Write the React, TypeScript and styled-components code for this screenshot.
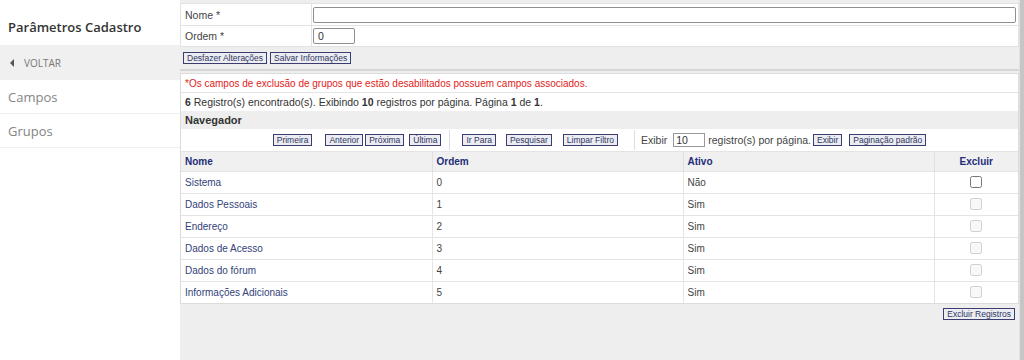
import React from 'react';
import styled, {createGlobalStyle} from 'styled-components';

type Grupo = {
    nome: string;
    ordem: number;
    ativo: boolean;
};

const grupos: Grupo[] = [
    {nome: 'Sistema', ordem: 0, ativo: false},
    {nome: 'Dados Pessoais', ordem: 1, ativo: true},
    {nome: 'Endereço', ordem: 2, ativo: true},
    {nome: 'Dados de Acesso', ordem: 3, ativo: true},
    {nome: 'Dados do fórum', ordem: 4, ativo: true},
    {nome: 'Informações Adicionais', ordem: 5, ativo: true},
];

const GlobalStyle = createGlobalStyle`
    html, body {
        margin: 0;
        padding: 0;
        background: #eeeeee;
    }
    * {
        box-sizing: border-box;
    }
`;

const Sidebar = () => (
    <Side>
        <SideTitle>{'Parâmetros Cadastro'}</SideTitle>
        <BackRow>
            <BackArrow/>
            {'VOLTAR'}
        </BackRow>
        <SideItem>{'Campos'}</SideItem>
        <SideItem>{'Grupos'}</SideItem>
    </Side>
);

const NavBar = () => (
    <NavRow>
        <Btn>{'Primeira'}</Btn>
        <Btn $ml={11}>{'Anterior'}</Btn>
        <Btn>{'Próxima'}</Btn>
        <Btn $ml={3}>{'Última'}</Btn>
        <NavSep/>
        <Btn>{'Ir Para'}</Btn>
        <Btn $ml={8}>{'Pesquisar'}</Btn>
        <Btn $ml={9}>{'Limpar Filtro'}</Btn>
        <NavSep $wide={true}/>
        <NavText>{'Exibir'}</NavText>
        <PerPage defaultValue='10'/>
        <NavText>{'registro(s) por página.'}</NavText>
        <Btn>{'Exibir'}</Btn>
        <Btn $ml={5}>{'Paginação padrão'}</Btn>
    </NavRow>
);

const App = () => {
    return (
        <>
            <GlobalStyle/>
            <Page>
                <Sidebar/>
                <Main>
                    <Content>
                        <FormTable>
                            <tbody>
                                <FormRow>
                                    <Label>{'Nome *'}</Label>
                                    <Field><TextInput $width={703}/></Field>
                                </FormRow>
                                <FormRow $h={21}>
                                    <Label>{'Ordem *'}</Label>
                                    <Field><TextInput $width={42} defaultValue='0'/></Field>
                                </FormRow>
                            </tbody>
                        </FormTable>
                        <FormActions>
                            <Btn>{'Desfazer Alterações'}</Btn>
                            <Btn>{'Salvar Informações'}</Btn>
                        </FormActions>
                        <Rule/>
                        <ListPanel>
                            <Warning>{'*Os campos de exclusão de grupos que estão desabilitados possuem campos associados.'}</Warning>
                            <Info>
                                <b>{'6'}</b>{' Registro(s) encontrado(s). Exibindo '}<b>{'10'}</b>{' registros por página. Página '}<b>{'1'}</b>{' de '}<b>{'1'}</b>{'.'}
                            </Info>
                            <NavTitle>{'Navegador'}</NavTitle>
                            <NavBar/>
                            <Grid>
                                <thead>
                                    <tr>
                                        <Th>{'Nome'}</Th>
                                        <Th>{'Ordem'}</Th>
                                        <Th>{'Ativo'}</Th>
                                        <Th $center={true}>{'Excluir'}</Th>
                                    </tr>
                                </thead>
                                <tbody>
                                    {grupos.map((g) => (
                                        <tr key={g.nome}>
                                            <Td $link={true}>{g.nome}</Td>
                                            <Td>{g.ordem}</Td>
                                            <Td>{g.ativo ? 'Sim' : 'Não'}</Td>
                                            <Td $center={true}>
                                                <Check
                                                    type='checkbox'
                                                    disabled={g.ativo}
                                                />
                                            </Td>
                                        </tr>
                                    ))}
                                </tbody>
                            </Grid>
                        </ListPanel>
                        <Footer>
                            <Btn>{'Excluir Registros'}</Btn>
                        </Footer>
                    </Content>
                    <Scroll/>
                </Main>
            </Page>
        </>
    );
};

const Page = styled.div`
    display: flex;
    height: 360px;
    width: 1024px;
    overflow: hidden;
`;

const Side = styled.div`
    width: 180px;
    flex-shrink: 0;
    background: #ffffff;
    padding-top: 3px;
    font-family: 'Open Sans', sans-serif;
`;

const SideTitle = styled.div`
    height: 42px;
    display: flex;
    align-items: center;
    padding: 6px 0 0 8px;
    font-size: 13px;
    font-weight: 600;
    color: #333333;
`;

const BackRow = styled.div`
    height: 35px;
    display: flex;
    align-items: center;
    gap: 10px;
    padding-left: 10px;
    background: #f0f0f0;
    font-size: 10px;
    color: #777777;
`;

const BackArrow = styled.span`
    width: 0;
    height: 0;
    border-top: 4px solid transparent;
    border-bottom: 4px solid transparent;
    border-right: 4px solid #555555;
`;

const SideItem = styled.div`
    height: 34px;
    display: flex;
    align-items: center;
    padding-left: 8px;
    font-size: 13px;
    color: #858585;
    border-bottom: 1px solid #f0f0f0;
`;

const Main = styled.div`
    flex: 1;
    display: flex;
    background: #eeeeee;
`;

const Content = styled.div`
    width: 839px;
    padding-top: 3px;
    font-family: 'Liberation Sans', Arial, sans-serif;
    font-size: 10.5px;
    color: #333333;
`;

const Scroll = styled.div`
    width: 5px;
    background: #c6c6c6;
    border-left: 1px solid #e2e2e2;
`;

const FormTable = styled.table`
    width: 100%;
    border-collapse: collapse;
    background: #ffffff;
    border: 1px solid #e2e2e2;
`;

const FormRow = styled.tr<{$h?: number}>`
    height: ${(p) => p.$h ?? 22}px;
    border-bottom: 1px solid #e2e2e2;
`;

const Label = styled.td`
    width: 131px;
    padding: 0 0 0 4px;
    border-right: 1px solid #e2e2e2;
    color: #444444;
`;

const Field = styled.td`
    padding: 0 0 0 1px;
`;

const TextInput = styled.input<{$width: number}>`
    display: block;
    width: ${(p) => p.$width}px;
    height: 16px;
    padding: 0 4px;
    border: 1px solid #8f8f8f;
    border-radius: 2px;
    font-family: 'Liberation Sans', Arial, sans-serif;
    font-size: 10.5px;
    color: #333333;
    background: #ffffff;
`;

const FormActions = styled.div`
    height: 21px;
    display: flex;
    align-items: center;
    gap: 3px;
    padding-left: 3px;
`;

const Rule = styled.div`
    margin-top: 1px;
    border-top: 2px solid #d6d6d6;
    height: 4px;
`;

const Btn = styled.button<{$ml?: number}>`
    height: 12px;
    margin-left: ${(p) => p.$ml ?? 0}px;
    padding: 0 3px;
    border: 1px solid #3c3c6e;
    background: #ecedf3;
    font-family: 'Liberation Sans', Arial, sans-serif;
    font-size: 8.5px;
    line-height: 10px;
    color: #2e3560;
    white-space: nowrap;
`;

const ListPanel = styled.div`
    border: 1px solid #dcdcdc;
    background: #ffffff;
`;

const Warning = styled.div`
    height: 19px;
    display: flex;
    align-items: center;
    padding-left: 4px;
    font-size: 10px;
    color: #e21b1b;
    border-bottom: 1px solid #e4e4e4;
`;

const Info = styled.div`
    height: 18px;
    display: flex;
    align-items: center;
    padding-left: 4px;
    white-space: pre;
    color: #333333;
`;

const NavTitle = styled.div`
    height: 18px;
    display: flex;
    align-items: center;
    padding-left: 4px;
    background: #eeeeee;
    font-weight: bold;
    font-size: 11px;
    color: #333333;
`;

const NavRow = styled.div`
    height: 23px;
    display: flex;
    align-items: center;
    justify-content: center;
    gap: 2px;
    border-bottom: 1px solid #e4e4e4;
`;

const NavSep = styled.span<{$wide?: boolean}>`
    width: 1px;
    height: 20px;
    background: #dddddd;
    margin: 0 ${(p) => (p.$wide ? 4 : 10)}px 0 ${(p) => (p.$wide ? 14 : 6)}px;
`;

const NavText = styled.span`
    font-size: 10.5px;
    color: #444444;
`;

const PerPage = styled.input`
    width: 32px;
    height: 14px;
    margin: 0 1px 0 4px;
    padding: 0 2px;
    border: 1px solid #999999;
    font-family: 'Liberation Sans', Arial, sans-serif;
    font-size: 10.5px;
    color: #333333;
`;

const Grid = styled.table`
    width: 100%;
    border-collapse: collapse;
    table-layout: fixed;
`;

const Th = styled.th<{$center?: boolean}>`
    height: 19px;
    padding: 0 4px;
    background: #f0f0f0;
    text-align: ${(p) => (p.$center ? 'center' : 'left')};
    font-weight: bold;
    font-size: 10px;
    color: #232d7a;
    border-right: 1px solid #e0e0e0;
    &:nth-child(1), &:nth-child(2), &:nth-child(3) {
        width: 251px;
    }
    &:last-child {
        border-right: none;
    }
`;

const Td = styled.td<{$link?: boolean; $center?: boolean}>`
    height: 22px;
    padding: 0 4px;
    text-align: ${(p) => (p.$center ? 'center' : 'left')};
    font-size: 10px;
    color: ${(p) => (p.$link ? '#33427a' : '#444444')};
    border-top: 1px solid #e4e4e4;
    border-right: 1px solid #e4e4e4;
    &:last-child {
        border-right: none;
    }
`;

const Check = styled.input`
    width: 12px;
    height: 12px;
    margin: 0;
    vertical-align: middle;
`;

const Footer = styled.div`
    display: flex;
    justify-content: flex-end;
    padding: 4px 4px 0 0;
`;

export default App;
